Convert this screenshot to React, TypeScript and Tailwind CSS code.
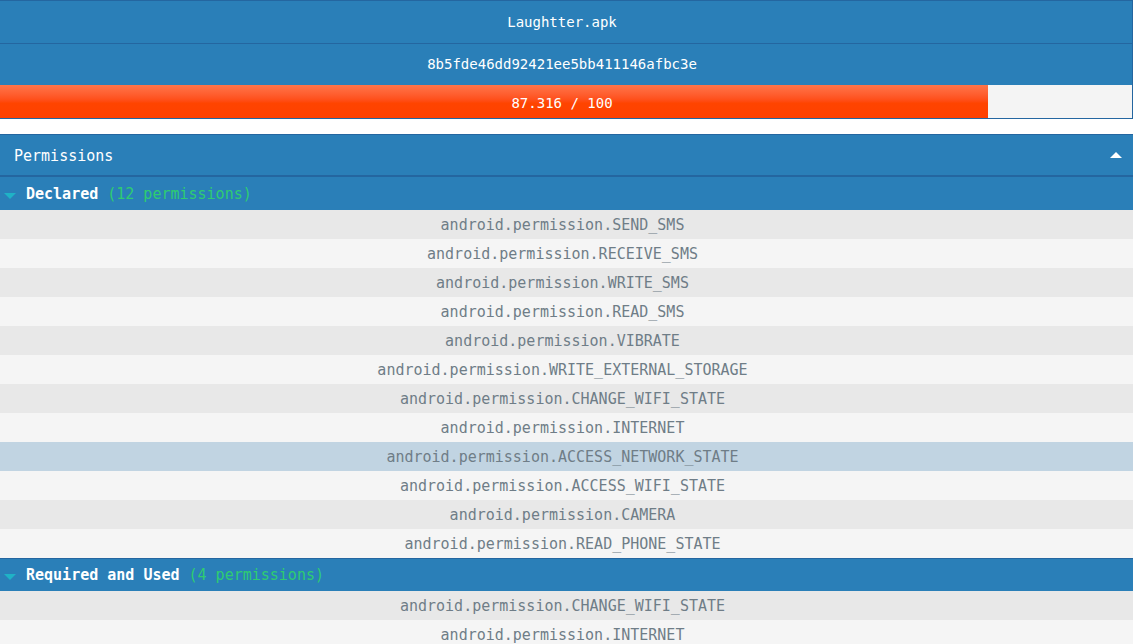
const declared = [
  'android.permission.SEND_SMS',
  'android.permission.RECEIVE_SMS',
  'android.permission.WRITE_SMS',
  'android.permission.READ_SMS',
  'android.permission.VIBRATE',
  'android.permission.WRITE_EXTERNAL_STORAGE',
  'android.permission.CHANGE_WIFI_STATE',
  'android.permission.INTERNET',
  'android.permission.ACCESS_NETWORK_STATE',
  'android.permission.ACCESS_WIFI_STATE',
  'android.permission.CAMERA',
  'android.permission.READ_PHONE_STATE',
];

const required = [
  'android.permission.CHANGE_WIFI_STATE',
  'android.permission.INTERNET',
  'android.permission.ACCESS_NETWORK_STATE',
  'android.permission.ACCESS_WIFI_STATE',
];

const score = 87.316;

function Caret() {
  return (
    <svg width="12" height="6" viewBox="0 0 12 6" className="mr-[10px] ml-1 mt-[3px] shrink-0">
      <path d="M0 0 L12 0 L6 6 Z" fill="#1fb2c6" />
    </svg>
  );
}

function GroupHeader({ title, count, border }: { title: string; count: number; border?: boolean }) {
  return (
    <div
      className={`flex h-[33px] items-center bg-[#2a7fb8] pt-px text-[15px] ${border ? 'border-t border-[#2466a0]' : ''}`}
    >
      <Caret />
      <span className="font-bold text-white">{title}</span>
      <span className="ml-[9px] text-[#2ecc71]">({count} permissions)</span>
    </div>
  );
}

function PermRow({ name, index, active }: { name: string; index: number; active?: boolean }) {
  const bg = active ? 'bg-[#c1d4e2]' : index % 2 === 0 ? 'bg-[#e8e8e8]' : 'bg-[#f5f5f5]';
  return (
    <div className={`flex h-[29px] items-center justify-center pt-[2px] pr-[8px] text-[15px] text-[#6f7d87] ${bg}`}>
      {name}
    </div>
  );
}

export default function App() {
  return (
    <div
      className="h-[644px] w-[1133px] overflow-hidden bg-white"
      style={{ fontFamily: '"DejaVu Sans Mono", "Liberation Mono", monospace' }}
    >
      {/* App summary */}
      <div className="border-y border-r border-[#2466a0] text-[14px] text-white">
        <div className="flex h-[43px] items-center justify-center border-b border-[#2466a0] bg-[#2a7fb8] pt-px pr-[8px]">
          Laughtter.apk
        </div>
        <div className="flex h-[41px] items-center justify-center bg-[#2a7fb8] pr-[8px]">
          8b5fde46dd92421ee5bb411146afbc3e
        </div>
        <div className="relative h-[33px] bg-[#f4f4f4]">
          <div
            className="absolute inset-y-0 left-0 bg-gradient-to-b from-[#ff7448] via-[#ff4400] via-55% to-[#ff4000]"
            style={{ width: `${score}%` }}
          />
          <div className="relative flex h-full items-center justify-center pt-[3px] pr-[8px]">
            {score} / 100
          </div>
        </div>
      </div>

      {/* Permissions panel */}
      <div className="mt-[15px]">
        <div className="flex h-[43px] items-center justify-between border-t border-b-2 border-[#2466a0] bg-[#2a7fb8] pt-[2px] pl-[14px] pr-[11px] text-[15px] text-white">
          <span>Permissions</span>
          <svg width="12" height="6" viewBox="0 0 12 6" className="-mt-[2px]">
            <path d="M0 6 L12 6 L6 0 Z" fill="#ffffff" />
          </svg>
        </div>
        <GroupHeader title="Declared" count={declared.length} />
        {declared.map((p, i) => (
          <PermRow key={p} name={p} index={i} active={p === 'android.permission.ACCESS_NETWORK_STATE'} />
        ))}
        <GroupHeader title="Required and Used" count={required.length} border />
        {required.map((p, i) => (
          <PermRow key={p} name={p} index={i} />
        ))}
      </div>
    </div>
  );
}
